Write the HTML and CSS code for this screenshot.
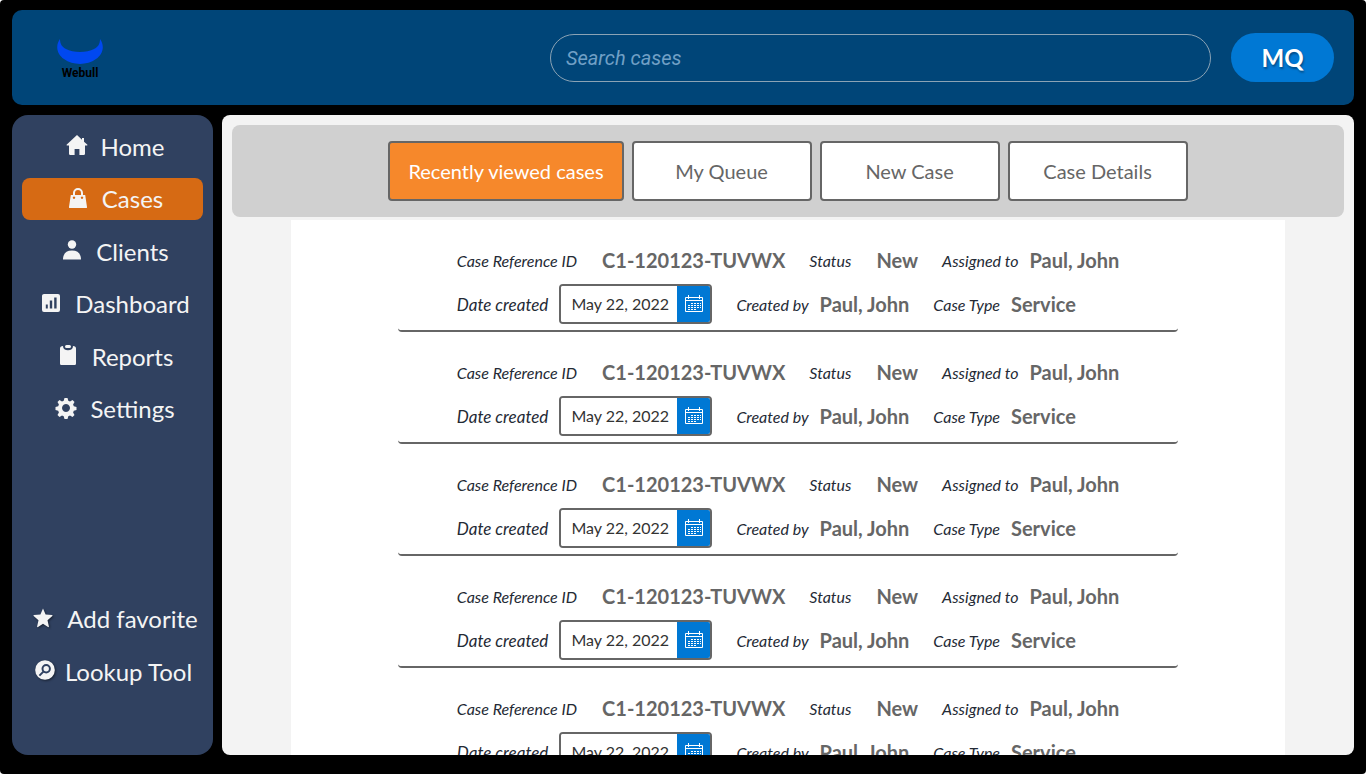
FILE: index.html
```html
<!DOCTYPE html>
<html lang="en">
<head>
<meta charset="utf-8">
<title>Cases</title>
<link rel="stylesheet" href="styles.css">
</head>
<body>
<svg class="sprite" aria-hidden="true">
  <symbol id="calendar" viewBox="0 0 18 18">
    <g fill="none" stroke="#fff" stroke-width="1">
      <path d="M.5 2.5h17v14H.5zM.5 5.5h17M3.500 0v4M14.500 0v4"/>
      <path d="M6 8.500h10M3 10.500h13M3 12.500h13M3 14.500h9" stroke-dasharray="2 1"/>
    </g>
  </symbol>
</svg>
<div class="app">
  <header class="topbar">
    <a class="logo" href="#" aria-label="Webull home">
      <svg width="46" height="25" viewBox="0 0 46 25"><path d="M3 0C-2 7 0 15 7 20c9 6.500 23 6.500 32 0 7-5 9-13 4-20 0 5-2 8-6 10-7 4-21 4-28 0C5 8 3 5 3 0Z" fill="#0048f0"/></svg>
      <span class="logo-name">Webull</span>
    </a>
    <input class="search" type="search" placeholder="Search cases" aria-label="Search cases">
    <button class="avatar" type="button">MQ</button>
  </header>

  <nav class="sidebar">
    <a class="nav-item" href="#"><svg class="nav-icon" viewBox="0 0 24 24"><path d="M12 2 1.800 11.600c-.4.500-.2 1 .4 1H4v8.200c0 .7.400 1.100 1 1.100h4.600v-5.800h4.800v5.800H19c.6 0 1-.4 1-1.100v-8.200h1.800c.6 0 .8-.5.400-1L19 8.700V5h-2v1.800Z"/></svg>Home</a>
    <a class="nav-item active" href="#"><svg class="nav-icon" viewBox="0 0 24 24"><path fill-rule="evenodd" d="M7 9V7a5 5 0 0 1 10 0v2h2.200L21 21c.1.600-.2 1-.8 1H3.800c-.6 0-.9-.4-.8-1L4.800 9Zm2 0h6V7a3 3 0 0 0-6 0Zm-1 1.500a1.200 1.200 0 1 0 .01 0Zm8 0a1.200 1.200 0 1 0 .01 0Z"/></svg>Cases</a>
    <a class="nav-item" href="#"><svg class="nav-icon" viewBox="0 0 24 24"><circle cx="12" cy="6.500" r="4.200"/><path d="M3 21.500c0-6 3.500-9 9-9s9 3 9 9Z"/></svg>Clients</a>
    <a class="nav-item" href="#"><svg class="nav-icon" viewBox="0 0 24 24"><path fill-rule="evenodd" d="M5 3h14a2 2 0 0 1 2 2v14a2 2 0 0 1-2 2H5a2 2 0 0 1-2-2V5c0-1.100.9-2 2-2Zm1.800 14.500h2v-4h-2Zm4 0h2.400v-8h-2.400Zm4.400 0h2.400v-11h-2.400Z"/></svg>Dashboard</a>
    <a class="nav-item" href="#"><svg class="nav-icon" viewBox="0 0 24 24"><rect x="9" y="2" width="6" height="3" rx="1.500"/><path d="M4 5.500C4 4 5 3 7 3c0 3 2 4.200 5 4.200S17 6 17 3c2 0 3 1 3 2.500v15c0 1-.8 1.500-1.500 1.500h-13C4.800 22 4 21.500 4 20.500Z"/></svg>Reports</a>
    <a class="nav-item" href="#"><svg class="nav-icon" viewBox="0 0 24 24"><path fill-rule="evenodd" d="m10.500 2h3l.8 2.700 1.700.7 2.500-1.400 2 2-1.400 2.500.7 1.700 2.700.8v3l-2.700.8-.7 1.700 1.400 2.500-2 2-2.500-1.400-1.700.7-.8 2.700h-3l-.8-2.700-1.700-.7L5.500 21l-2-2 1.400-2.500-.7-1.700L1.500 14v-3l2.700-.8.7-1.700L3.500 6l2-2L8 5.400l1.700-.7ZM12 8a4 4 0 1 0 .01 0Z"/></svg>Settings</a>
    <a class="nav-item favorite" href="#"><svg class="nav-icon shadow" viewBox="0 0 24 24"><path d="m12 2.500 2.600 5.900 6.400.6c.6.100.8.600.3 1l-4.800 4.300 1.400 6.200c.1.600-.4.900-.9.600L12 17.800l-5 3.300c-.5.300-1 0-.9-.6l1.400-6.200L2.700 10c-.5-.4-.3-.9.300-1l6.400-.6Z"/></svg>Add favorite</a>
    <a class="nav-item lookup" href="#"><svg class="nav-icon shadow" viewBox="0 0 24 24"><circle cx="12" cy="12" r="9.800"/><circle class="lens" cx="13.200" cy="10.800" r="3.700"/><path class="lens" d="m10.400 13.600-4 4"/></svg>Lookup Tool</a>
  </nav>

  <main class="content">
    <div class="tabs">
      <button class="tab selected" type="button">Recently viewed cases</button>
      <button class="tab" type="button">My Queue</button>
      <button class="tab" type="button">New Case</button>
      <button class="tab" type="button">Case Details</button>
    </div>
    <div class="cases">
      <article class="case">
        <div class="fields">
          <div class="line">
            <span class="pair wide"><span class="label">Case Reference ID</span><b class="value">C1-120123-TUVWX</b></span>
            <span class="pair wide"><span class="label">Status</span><b class="value">New</b></span>
            <span class="pair"><span class="label">Assigned to</span><b class="value">Paul, John</b></span>
          </div>
          <div class="line">
            <span class="pair"><label class="label large" for="date1">Date created</label><span class="date"><input class="date-input" id="date1" type="text" value="May 22, 2022"><button class="date-button" type="button" aria-label="Choose date"><svg class="calendar"><use href="#calendar"/></svg></button></span></span>
            <span class="pair"><span class="label">Created by</span><b class="value">Paul, John</b></span>
            <span class="pair"><span class="label">Case Type</span><b class="value">Service</b></span>
          </div>
        </div>
      </article>
      <article class="case">
        <div class="fields">
          <div class="line">
            <span class="pair wide"><span class="label">Case Reference ID</span><b class="value">C1-120123-TUVWX</b></span>
            <span class="pair wide"><span class="label">Status</span><b class="value">New</b></span>
            <span class="pair"><span class="label">Assigned to</span><b class="value">Paul, John</b></span>
          </div>
          <div class="line">
            <span class="pair"><label class="label large" for="date2">Date created</label><span class="date"><input class="date-input" id="date2" type="text" value="May 22, 2022"><button class="date-button" type="button" aria-label="Choose date"><svg class="calendar"><use href="#calendar"/></svg></button></span></span>
            <span class="pair"><span class="label">Created by</span><b class="value">Paul, John</b></span>
            <span class="pair"><span class="label">Case Type</span><b class="value">Service</b></span>
          </div>
        </div>
      </article>
      <article class="case">
        <div class="fields">
          <div class="line">
            <span class="pair wide"><span class="label">Case Reference ID</span><b class="value">C1-120123-TUVWX</b></span>
            <span class="pair wide"><span class="label">Status</span><b class="value">New</b></span>
            <span class="pair"><span class="label">Assigned to</span><b class="value">Paul, John</b></span>
          </div>
          <div class="line">
            <span class="pair"><label class="label large" for="date3">Date created</label><span class="date"><input class="date-input" id="date3" type="text" value="May 22, 2022"><button class="date-button" type="button" aria-label="Choose date"><svg class="calendar"><use href="#calendar"/></svg></button></span></span>
            <span class="pair"><span class="label">Created by</span><b class="value">Paul, John</b></span>
            <span class="pair"><span class="label">Case Type</span><b class="value">Service</b></span>
          </div>
        </div>
      </article>
      <article class="case">
        <div class="fields">
          <div class="line">
            <span class="pair wide"><span class="label">Case Reference ID</span><b class="value">C1-120123-TUVWX</b></span>
            <span class="pair wide"><span class="label">Status</span><b class="value">New</b></span>
            <span class="pair"><span class="label">Assigned to</span><b class="value">Paul, John</b></span>
          </div>
          <div class="line">
            <span class="pair"><label class="label large" for="date4">Date created</label><span class="date"><input class="date-input" id="date4" type="text" value="May 22, 2022"><button class="date-button" type="button" aria-label="Choose date"><svg class="calendar"><use href="#calendar"/></svg></button></span></span>
            <span class="pair"><span class="label">Created by</span><b class="value">Paul, John</b></span>
            <span class="pair"><span class="label">Case Type</span><b class="value">Service</b></span>
          </div>
        </div>
      </article>
      <article class="case">
        <div class="fields">
          <div class="line">
            <span class="pair wide"><span class="label">Case Reference ID</span><b class="value">C1-120123-TUVWX</b></span>
            <span class="pair wide"><span class="label">Status</span><b class="value">New</b></span>
            <span class="pair"><span class="label">Assigned to</span><b class="value">Paul, John</b></span>
          </div>
          <div class="line">
            <span class="pair"><label class="label large" for="date5">Date created</label><span class="date"><input class="date-input" id="date5" type="text" value="May 22, 2022"><button class="date-button" type="button" aria-label="Choose date"><svg class="calendar"><use href="#calendar"/></svg></button></span></span>
            <span class="pair"><span class="label">Created by</span><b class="value">Paul, John</b></span>
            <span class="pair"><span class="label">Case Type</span><b class="value">Service</b></span>
          </div>
        </div>
      </article>
    </div>
  </main>
</div>
</body>
</html>
```

FILE: styles.css
```css
* {
  box-sizing: border-box;
}

body {
  margin: 0;
  background: #fff;
  font-family: Lato, "Liberation Sans", sans-serif;
}

button,
input {
  font-family: inherit;
}

.sprite {
  display: none;
}

.app {
  display: grid;
  grid-template: auto minmax(0, 1fr) / 201px minmax(0, 1fr);
  gap: 10px 9px;
  height: 100vh;
  padding: 10px 12px 19px;
  background: #000;
  border-radius: 4px;
}

/* Header */
.topbar {
  grid-column: 1 / -1;
  display: flex;
  align-items: center;
  gap: 20px;
  padding: 23px 20px 23px 45px;
  background: #004578;
  border-radius: 10px;
}

.logo {
  display: flex;
  flex-direction: column;
  align-items: center;
  gap: 2px;
  margin-right: auto;
  padding-top: 3px;
  color: #000;
  text-decoration: none;
}

.logo-name {
  font: 700 12px/14px Roboto, sans-serif;
}

.search {
  flex: 0 1 661px;
  min-width: 0;
  height: 48px;
  padding: 0 15px;
  border: 1px solid #8ba3b5;
  border-radius: 24px;
  background: transparent;
  color: #fff;
  font: italic 20px Roboto, sans-serif;
  appearance: none;
}

.search::placeholder {
  color: #71a0c6;
}

.avatar {
  width: 103px;
  height: 49px;
  border: 0;
  border-radius: 25px;
  background: #0078d4;
  color: #fff;
  font-size: 24px;
  font-weight: 700;
  text-shadow: 1px 2px 2px rgba(0, 0, 0, .35);
}

/* Sidebar */
.sidebar {
  display: grid;
  grid-template-rows: repeat(12, 1fr);
  gap: 10px;
  padding: 10px;
  background: #304160;
  border-radius: 16px;
}

.nav-item {
  display: flex;
  align-items: center;
  justify-content: center;
  gap: 12px;
  padding-left: 4px;
  border-radius: 8px;
  color: #f4f4f4;
  font-size: 24px;
  text-decoration: none;
  white-space: nowrap;
}

.nav-item.active {
  background: #d66a14;
}

.favorite {
  grid-row: 10;
}

.lookup {
  grid-row: 11;
  gap: 8px;
  padding-left: 0;
}

.nav-icon {
  flex: none;
  width: 24px;
  height: 24px;
  margin-bottom: 2px;
  fill: currentColor;
}

.shadow {
  filter: drop-shadow(1px 1px 1px rgba(0, 0, 0, .5));
}

.lens {
  fill: none;
  stroke: #304160;
  stroke-width: 2;
}

/* Content */
.content {
  display: flex;
  flex-direction: column;
  align-items: center;
  gap: 3px;
  padding: 10px 10px 0;
  overflow: hidden;
  background: #f3f3f3;
  border-radius: 8px;
}

.tabs {
  display: flex;
  justify-content: center;
  gap: 8px;
  width: 100%;
  padding: 16px;
  background: #d0d0d0;
  border-radius: 8px;
}

.tab {
  min-width: 180px;
  height: 60px;
  padding: 0 18px;
  border: 2px solid #666;
  border-radius: 4px;
  background: #fff;
  color: #666;
  font-size: 20px;
}

.tab.selected {
  background: #f6882b;
  color: #fff;
}

.cases {
  flex: 1;
  min-height: 0;
  width: 100%;
  max-width: 994px;
  overflow-y: auto;
  scrollbar-width: none;
  background: #fff;
}

.case {
  display: flex;
  justify-content: center;
  max-width: 780px;
  height: 112px;
  margin: 0 auto;
  padding-top: 20px;
  border-bottom: 2px solid #666;
  border-radius: 4px;
}

.fields {
  display: flex;
  flex-direction: column;
  gap: 4px;
}

.line {
  display: flex;
  gap: 24px;
  height: 40px;
}

.pair {
  display: flex;
  align-items: center;
  gap: 11px;
  white-space: nowrap;
}

.wide {
  gap: 25px;
}

.label {
  color: #242a35;
  font-size: 16px;
  font-style: italic;
}

.large {
  font-size: 17px;
}

.value {
  color: #666;
  font-size: 20px;
  font-weight: 700;
}

.date {
  display: flex;
  width: 153px;
  height: 40px;
  overflow: hidden;
  border: 2px solid #666;
  border-radius: 4px;
}

.date-input {
  flex: 1;
  min-width: 0;
  padding: 0 0 2px 10px;
  border: 0;
  background: #fff;
  color: #333;
  font-size: 16px;
}

.date-button {
  display: flex;
  align-items: center;
  justify-content: center;
  width: 33px;
  padding: 0;
  border: 0;
  background: #0078d4;
}

.calendar {
  width: 18px;
  height: 18px;
}
```
